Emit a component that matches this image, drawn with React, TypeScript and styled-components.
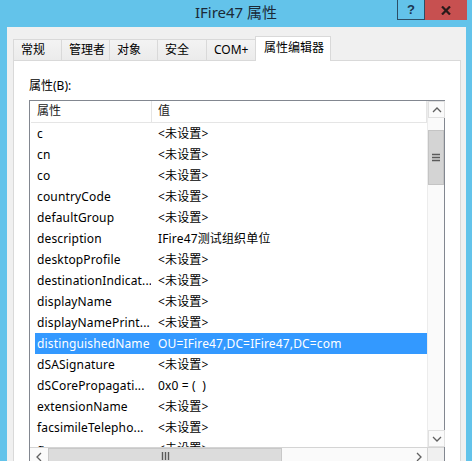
import styled, { createGlobalStyle } from 'styled-components'

const GlobalStyle = createGlobalStyle`
  html, body { margin: 0; padding: 0; }
  body {
    font-family: "Noto Sans", "Noto Sans CJK SC", sans-serif;
    font-size: 12px;
    color: #000;
  }
`

const rows: [string, string][] = [
  ['c', '<未设置>'],
  ['cn', '<未设置>'],
  ['co', '<未设置>'],
  ['countryCode', '<未设置>'],
  ['defaultGroup', '<未设置>'],
  ['description', 'IFire47测试组织单位'],
  ['desktopProfile', '<未设置>'],
  ['destinationIndicat...', '<未设置>'],
  ['displayName', '<未设置>'],
  ['displayNamePrint...', '<未设置>'],
  ['distinguishedName', 'OU=IFire47,DC=IFire47,DC=com'],
  ['dSASignature', '<未设置>'],
  ['dSCorePropagati...', '0x0 = (  )'],
  ['extensionName', '<未设置>'],
  ['facsimileTelepho...', '<未设置>'],
  ['g', '<未设置>'],
]

const tabs = [
  { label: '常规', width: 49 },
  { label: '管理者', width: 49 },
  { label: '对象', width: 49 },
  { label: '安全', width: 50 },
  { label: 'COM+', width: 50 },
  { label: '属性编辑器', width: 76, active: true },
]

export default function App() {
  return (
    <>
      <GlobalStyle />
      <Window>
        <TitleBar>
          <span />
          <Title>IFire47 属性</Title>
          <Caption>
            <HelpButton>?</HelpButton>
            <CloseButton>
              <svg width="10" height="9" viewBox="0 0 10 9">
                <path d="M1 0.5 L9 8.5 M9 0.5 L1 8.5" stroke="#2a1a1a" strokeWidth="2.2" />
              </svg>
            </CloseButton>
          </Caption>
        </TitleBar>
        <Body>
          <TabStrip>
            {tabs.map((t) => (
              <Tab key={t.label} $width={t.width} $active={!!t.active}>
                {t.label}
              </Tab>
            ))}
          </TabStrip>
          <Panel>
            <Label>属性(B):</Label>
            <ListBox>
              <ListArea>
                <Header>
                  <HeadCell $w={121}>属性</HeadCell>
                  <HeadCell>值</HeadCell>
                </Header>
                {rows.map(([name, value]) => (
                  <Row key={name} $selected={name === 'distinguishedName'}>
                    <NameCell>{name}</NameCell>
                    <ValueCell>{value}</ValueCell>
                  </Row>
                ))}
              </ListArea>
              <VScroll>
                <ArrowBox $bordered>
                  <Chevron dir="up" />
                </ArrowBox>
                <VThumb>
                  <svg width="8" height="9" viewBox="0 0 8 9">
                    <path d="M0 1.5 H8 M0 4.5 H8 M0 7.5 H8" stroke="#5a5a5a" strokeWidth="1.4" />
                  </svg>
                </VThumb>
                <Spacer />
                <ArrowBox $bordered>
                  <Chevron dir="down" />
                </ArrowBox>
              </VScroll>
              <HScroll>
                <ArrowBox>
                  <Chevron dir="left" />
                </ArrowBox>
                <HThumb>
                  <svg width="9" height="8" viewBox="0 0 9 8">
                    <path d="M1.5 0 V8 M4.5 0 V8 M7.5 0 V8" stroke="#5a5a5a" strokeWidth="1.4" />
                  </svg>
                </HThumb>
                <Spacer />
                <ArrowBox>
                  <Chevron dir="right" />
                </ArrowBox>
              </HScroll>
              <Corner />
            </ListBox>
          </Panel>
        </Body>
      </Window>
    </>
  )
}

function Chevron({ dir }: { dir: 'up' | 'down' | 'left' | 'right' }) {
  const d = {
    up: 'M1 6 L5 2 L9 6',
    down: 'M1 2 L5 6 L9 2',
    left: 'M6 1 L2 5 L6 9',
    right: 'M2 1 L6 5 L2 9',
  }[dir]
  const vertical = dir === 'up' || dir === 'down'
  return (
    <svg width={vertical ? 10 : 8} height={vertical ? 8 : 10} viewBox={vertical ? '0 0 10 8' : '0 0 8 10'}>
      <path d={d} stroke="#606060" strokeWidth="1.3" fill="none" />
    </svg>
  )
}

const Window = styled.div`
  width: 472px;
  height: 461px;
  background: #63c3ea;
  overflow: hidden;
  display: flex;
  flex-direction: column;
`

const TitleBar = styled.div`
  height: 27px;
  flex: none;
  display: grid;
  grid-template-columns: 1fr auto 1fr;
  align-items: start;
`

const Title = styled.div`
  font-size: 15px;
  line-height: 25px;
  color: #1b2a38;
`

const Caption = styled.div`
  justify-self: end;
  display: flex;
  margin-right: 5px;
`

const HelpButton = styled.div`
  width: 26px;
  height: 19px;
  border: 1px solid #2c4e66;
  border-top: none;
  box-sizing: content-box;
  display: flex;
  align-items: center;
  justify-content: center;
  font-family: "Liberation Sans", sans-serif;
  font-weight: bold;
  font-size: 13px;
  color: #1c3550;
`

const CloseButton = styled.div`
  width: 42px;
  height: 20px;
  background: #c75050;
  display: flex;
  align-items: center;
  justify-content: center;
`

const Body = styled.div`
  flex: 1;
  margin: 0 6px 0 7px;
  background: #f0f0f0;
  padding: 9px 5px 0 6px;
  display: flex;
  flex-direction: column;
  min-height: 0;
`

const TabStrip = styled.div`
  display: flex;
  align-items: flex-end;
  height: 25px;
  padding-left: 1px;
  position: relative;
  z-index: 1;
  margin-bottom: -1px;
`

const Tab = styled.div<{ $width: number; $active: boolean }>`
  box-sizing: border-box;
  width: ${(p) => p.$width}px;
  height: ${(p) => (p.$active ? 25 : 22)}px;
  margin-left: -1px;
  padding-left: ${(p) => (p.$active ? 8 : 7)}px;
  border: 1px solid #d9d9d9;
  border-bottom: ${(p) => (p.$active ? 'none' : '1px solid #d9d9d9')};
  background: ${(p) => (p.$active ? '#fff' : 'linear-gradient(#f3f3f3, #ebebeb)')};
  line-height: ${(p) => (p.$active ? 22 : 20)}px;
  white-space: nowrap;
  color: #000;
`

const Panel = styled.div`
  flex: 1;
  background: #fff;
  border: 1px solid #d9d9d9;
  padding: 0 15px;
  display: flex;
  flex-direction: column;
`

const Label = styled.div`
  margin-top: 17px;
  line-height: 16px;
  margin-bottom: 6px;
`

const ListBox = styled.div`
  flex: none;
  height: 363px;
  border: 1px solid #828790;
  display: grid;
  grid-template-columns: 1fr 17px;
  grid-template-rows: 1fr 17px;
  background: #fff;
`

const ListArea = styled.div`
  overflow: hidden;
`

const Header = styled.div`
  display: flex;
  height: 21px;
  border-bottom: 1px solid #e5e5e5;
  margin-left: 1px;
`

const HeadCell = styled.div<{ $w?: number }>`
  ${(p) => (p.$w ? `width: ${p.$w}px; flex: none;` : 'flex: 1;')}
  box-sizing: border-box;
  padding-left: 6px;
  line-height: 20px;
  border-right: 1px solid #e5e5e5;
  color: #222;
`

const Row = styled.div<{ $selected: boolean }>`
  display: flex;
  height: 21px;
  margin-left: 5px;
  line-height: 22px;
  background: ${(p) => (p.$selected ? '#3399ff' : 'transparent')};
  color: ${(p) => (p.$selected ? '#fff' : '#000')};
  white-space: pre;
  letter-spacing: 0.15px;
`

const NameCell = styled.div`
  width: 116px;
  flex: none;
  padding-left: 2px;
  box-sizing: border-box;
  overflow: hidden;
`

const ValueCell = styled.div`
  flex: 1;
  padding-left: 7px;
  overflow: hidden;
`

const VScroll = styled.div`
  display: flex;
  flex-direction: column;
  background: #fafafa;
  border-left: 1px solid #ececec;
`

const HScroll = styled.div`
  display: flex;
  background: #fafafa;
  border-top: 1px solid #d4d4d4;
`

const ArrowBox = styled.div<{ $bordered?: boolean }>`
  width: 17px;
  height: 17px;
  flex: none;
  box-sizing: border-box;
  display: flex;
  align-items: center;
  justify-content: center;
  border: ${(p) => (p.$bordered ? '1px solid #e0e0e0' : 'none')};
`

const VThumb = styled.div`
  margin-top: 12px;
  height: 55px;
  flex: none;
  background: #d4d4d4;
  border: 1px solid #c4c4c4;
  box-sizing: border-box;
  display: flex;
  align-items: center;
  justify-content: center;
`

const HThumb = styled.div`
  margin-left: 1px;
  width: 234px;
  flex: none;
  background: #dcdcdc;
  border: 1px solid #c8c8c8;
  box-sizing: border-box;
  display: flex;
  align-items: center;
  justify-content: center;
`

const Spacer = styled.div`
  flex: 1;
`

const Corner = styled.div`
  background: #f0f0f0;
  border-top: 1px solid #d4d4d4;
  border-left: 1px solid #d4d4d4;
`
